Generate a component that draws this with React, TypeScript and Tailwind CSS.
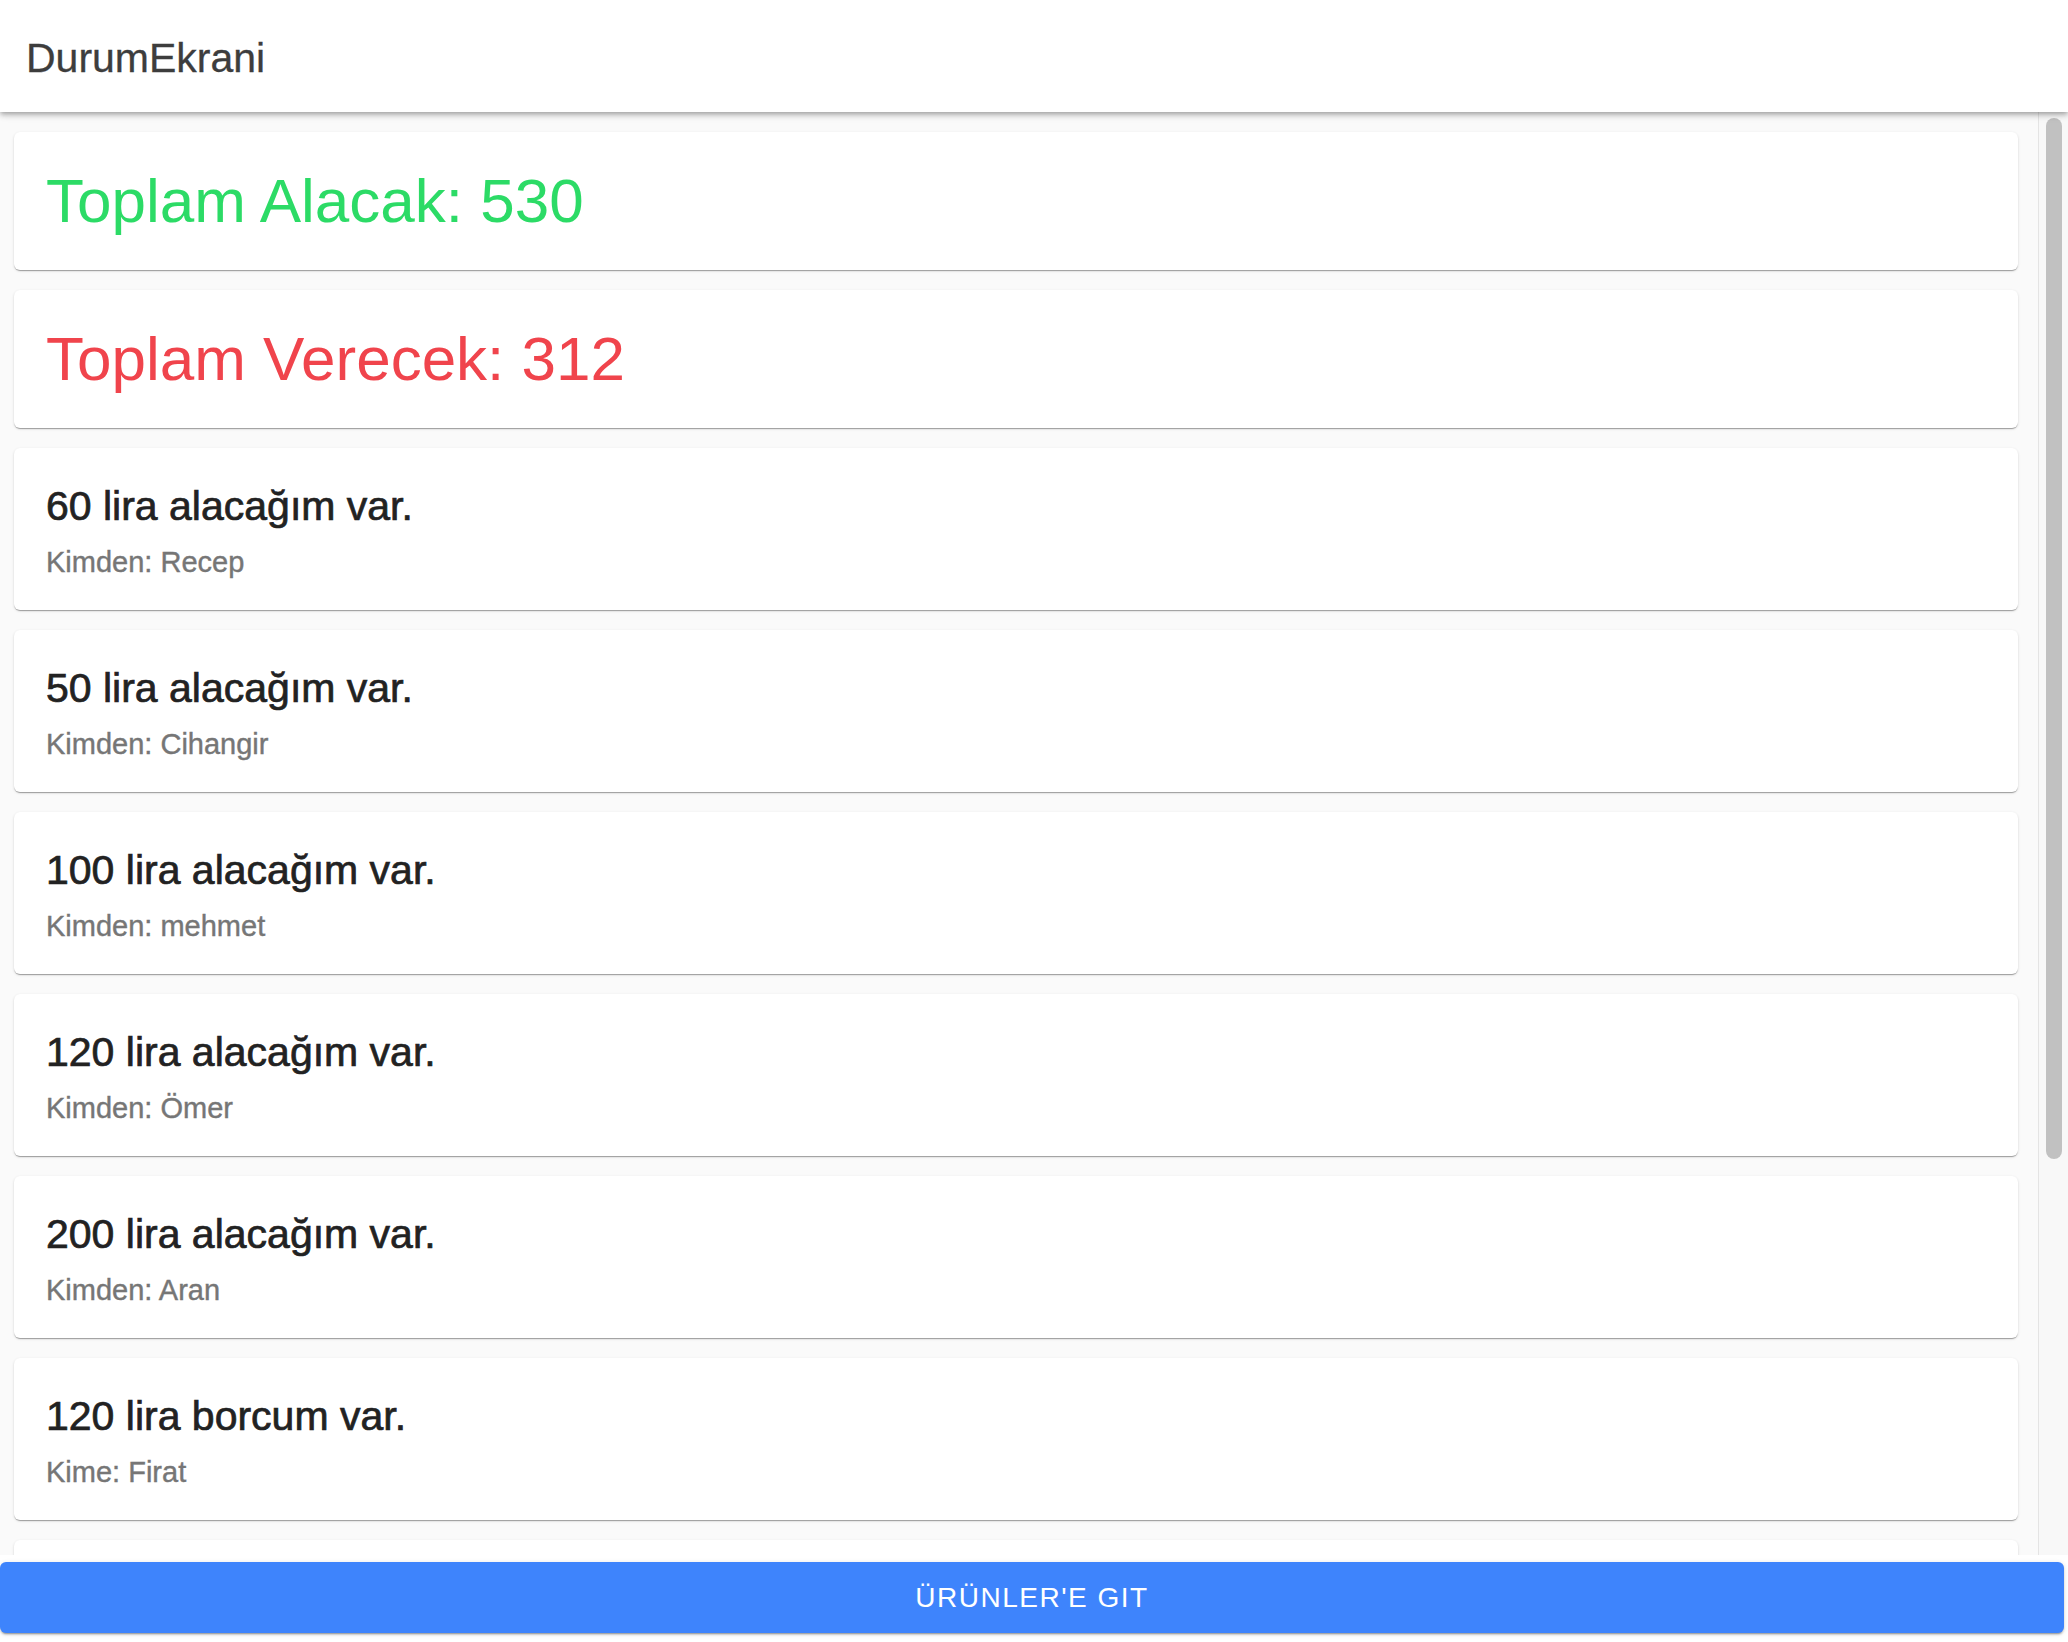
import React from "react";

type Kayit = { tutar: number; tip: "alacak" | "borc"; kisi: string };

const kayitlar: Kayit[] = [
  { tutar: 60, tip: "alacak", kisi: "Recep" },
  { tutar: 50, tip: "alacak", kisi: "Cihangir" },
  { tutar: 100, tip: "alacak", kisi: "mehmet" },
  { tutar: 120, tip: "alacak", kisi: "Ömer" },
  { tutar: 200, tip: "alacak", kisi: "Aran" },
  { tutar: 120, tip: "borc", kisi: "Firat" },
  { tutar: 192, tip: "borc", kisi: "Ali" },
];

const cardShadow =
  "shadow-[0_2px_1px_-1px_rgba(0,0,0,0.2),0_1px_1px_0_rgba(0,0,0,0.14),0_1px_3px_0_rgba(0,0,0,0.12)]";

const App = () => {
  return (
    <div
      className="flex h-[1642px] w-[2068px] flex-col overflow-hidden bg-white"
      style={{ fontFamily: '"Liberation Sans", Arial, sans-serif' }}
    >
      {/* Header */}
      <header className="relative z-10 flex h-[112px] shrink-0 items-center bg-white pl-[26px] shadow-[0_2px_4px_-1px_rgba(0,0,0,0.2),0_4px_5px_0_rgba(0,0,0,0.14),0_1px_10px_0_rgba(0,0,0,0.12)]">
        <h1 className="pt-[4px] text-[41px] leading-[48px] text-[#3d3d3d] [-webkit-text-stroke:0.3px_#3d3d3d]">
          DurumEkrani
        </h1>
      </header>

      {/* Scroll area */}
      <div className="flex min-h-0 flex-1 bg-[#fafafa]">
        <div className="flex min-w-0 flex-1 flex-col gap-[20px] overflow-hidden pb-[20px] pl-[14px] pr-[20px] pt-[20px]">
          <div className={`shrink-0 rounded-[6px] bg-white px-[32px] py-[33px] ${cardShadow}`}>
            <div className="text-[62px] leading-[72px] text-[#2cdb66]">Toplam Alacak: 530</div>
          </div>
          <div className={`shrink-0 rounded-[6px] bg-white px-[32px] py-[33px] ${cardShadow}`}>
            <div className="text-[62px] leading-[72px] text-[#f0444c]">Toplam Verecek: 312</div>
          </div>

          {kayitlar.map((k, i) => (
            <div
              key={i}
              className={`shrink-0 rounded-[6px] bg-white px-[32px] pb-[31px] pt-[34px] ${cardShadow}`}
            >
              <div className="text-[41px] leading-[48px] text-[#222222] [-webkit-text-stroke:0.7px_#222222]">
                {k.tip === "alacak"
                  ? `${k.tutar} lira alacağım var.`
                  : `${k.tutar} lira borcum var.`}
              </div>
              <div className="mt-[15px] text-[29px] leading-[34px] text-[#767676] [-webkit-text-stroke:0.4px_#767676]">
                {k.tip === "alacak" ? `Kimden: ${k.kisi}` : `Kime: ${k.kisi}`}
              </div>
            </div>
          ))}
        </div>

        {/* Scrollbar */}
        <div className="w-[30px] shrink-0 border-l border-[#e4e4e4] bg-[#f8f8f8] pl-[7px] pt-[6px]">
          <div className="h-[1041px] w-[16px] rounded-full bg-[#c1c1c1]" />
        </div>
      </div>

      {/* Bottom */}
      <div className="shrink-0 bg-white pb-[9px] pr-[4px] pt-[7px]">
        <button className="flex h-[71px] w-full items-center justify-center rounded-[6px] bg-[#3e84fc] text-[28px] uppercase tracking-[1.5px] text-white shadow-[0_3px_1px_-2px_rgba(0,0,0,0.2),0_2px_2px_0_rgba(0,0,0,0.14),0_1px_5px_0_rgba(0,0,0,0.12)]">
          ÜRÜNLER'E GIT
        </button>
      </div>
    </div>
  );
};

export default App;
